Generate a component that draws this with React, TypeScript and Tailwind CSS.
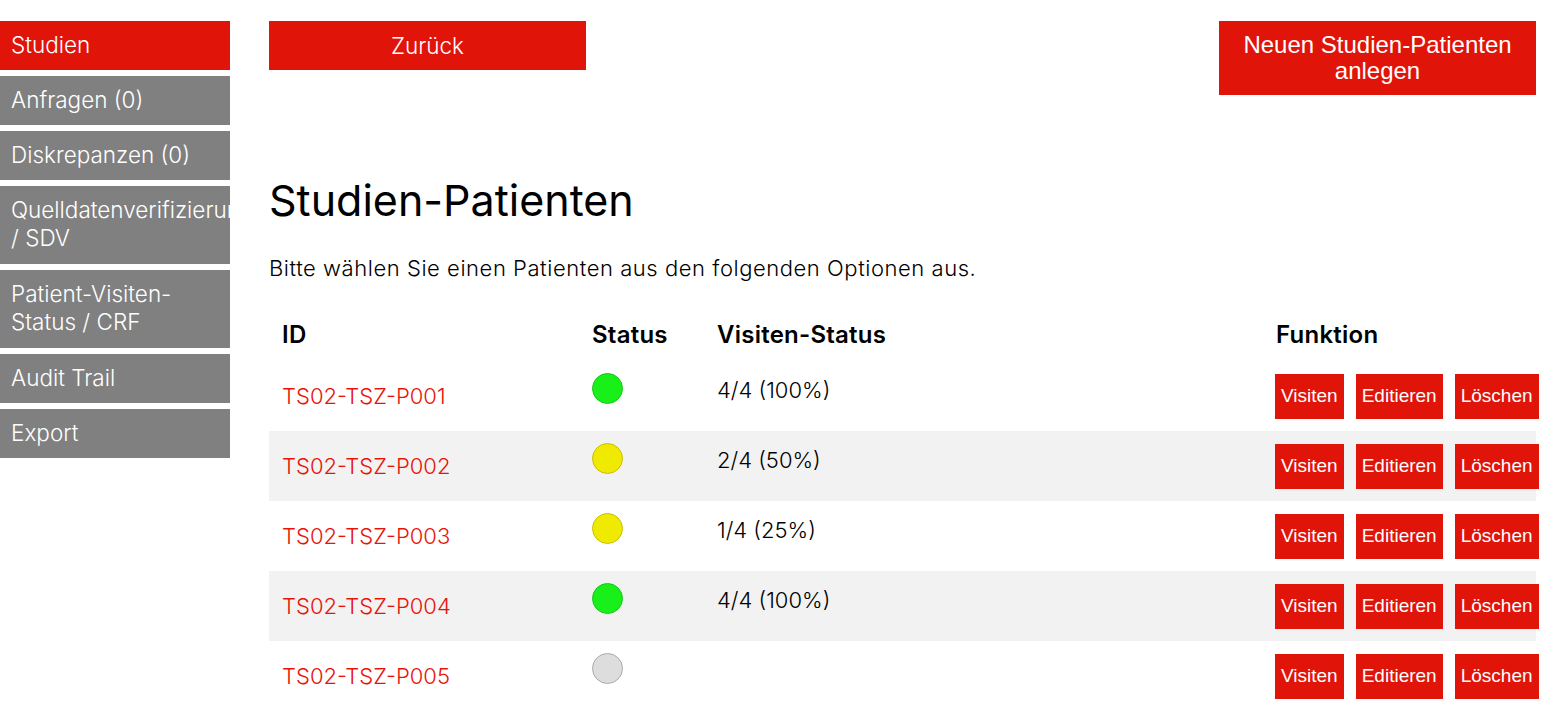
import React from "react";

const nav = [
  { label: "Studien", active: true, h: "h-[49px]" },
  { label: "Anfragen (0)", h: "h-[49px]" },
  { label: "Diskrepanzen (0)", h: "h-[49px]" },
  { label: "Quelldatenverifizierung / SDV", h: "h-[78px]" },
  { label: "Patient-Visiten-Status / CRF", h: "h-[78px]" },
  { label: "Audit Trail", h: "h-[49px]" },
  { label: "Export", h: "h-[49px]" },
];

const rows = [
  { id: "TS02-TSZ-P001", color: "bg-[#19f019] border-[#14c814]", visits: "4/4 (100%)" },
  { id: "TS02-TSZ-P002", color: "bg-[#f0ea00] border-[#c8c000]", visits: "2/4 (50%)" },
  { id: "TS02-TSZ-P003", color: "bg-[#f0ea00] border-[#c8c000]", visits: "1/4 (25%)" },
  { id: "TS02-TSZ-P004", color: "bg-[#19f019] border-[#14c814]", visits: "4/4 (100%)" },
  { id: "TS02-TSZ-P005", color: "bg-[#dddddd] border-[#aaaaaa]", visits: "" },
];

const sans = "font-['Inter',sans-serif]";
const arial = "font-['Liberation_Sans',Arial,sans-serif]";

export default function App() {
  return (
    <div className={`flex bg-white min-h-[712px] text-black ${sans}`}>
      <nav className="w-[230px] shrink-0 mt-[21px] flex flex-col gap-[6px]">
        {nav.map((n) => (
          <div
            key={n.label}
            className={`${n.h} ${n.active ? "bg-[#e1140a]" : "bg-[#808080]"} text-white text-[22.5px] font-light leading-[28px] pl-[11px] pt-[10px] overflow-hidden`}
          >
            {n.label === "Quelldatenverifizierung / SDV" ? (
              <>
                <span className="block whitespace-nowrap">Quelldatenverifizierung</span>
                <span className="block">/ SDV</span>
              </>
            ) : n.label === "Patient-Visiten-Status / CRF" ? (
              <>
                <span className="block">Patient-Visiten-</span>
                <span className="block">Status / CRF</span>
              </>
            ) : (
              <span className="block whitespace-nowrap">{n.label}</span>
            )}
          </div>
        ))}
      </nav>

      <main className="ml-[39px] w-[1267px] mt-[21px]">
        <div className="flex justify-between items-start">
          <button className="w-[317px] h-[49px] bg-[#e1140a] text-white text-[22.5px] font-light">Zurück</button>
          <button className={`w-[317px] h-[74px] bg-[#e1140a] text-white text-[24px] leading-[26px] ${arial}`}>
            Neuen Studien-Patienten
            <br />
            anlegen
          </button>
        </div>

        <h1 className="mt-[80px] text-[43px] leading-[50px] font-normal">Studien-Patienten</h1>
        <p className="mt-[29px] text-[22px] leading-[28px] font-light tracking-[0.025em]">
          Bitte wählen Sie einen Patienten aus den folgenden Optionen aus.
        </p>

        <div className="mt-[27px]">
          <div className="grid grid-cols-[323px_125px_558px_1fr] h-[52px] items-center text-[24px] font-semibold tracking-[0.01em]">
            <div className="pl-[13px]">ID</div>
            <div>Status</div>
            <div>Visiten-Status</div>
            <div className="pl-[1px]">Funktion</div>
          </div>
          {rows.map((r, i) => (
            <div
              key={r.id}
              className={`grid grid-cols-[323px_125px_558px_1fr] h-[70px] ${i % 2 === 1 ? "bg-[#f2f2f2]" : ""}`}
            >
              <div className="pl-[13px] flex items-center text-[22px] font-light text-[#e8140a]">{r.id}</div>
              <div className="pt-[12px]">
                <div className={`w-[31px] h-[31px] rounded-full border ${r.color}`} />
              </div>
              <div className="pt-[15px] text-[22px] leading-[28px] font-light">{r.visits}</div>
              <div className={`flex items-center gap-[12px] ${arial} text-[19px] text-white`}>
                <button className="h-[45px] px-[6px] bg-[#e1140a]">Visiten</button>
                <button className="h-[45px] px-[6px] bg-[#e1140a]">Editieren</button>
                <button className="h-[45px] px-[6px] bg-[#e1140a]">Löschen</button>
              </div>
            </div>
          ))}
        </div>
      </main>
    </div>
  );
}
